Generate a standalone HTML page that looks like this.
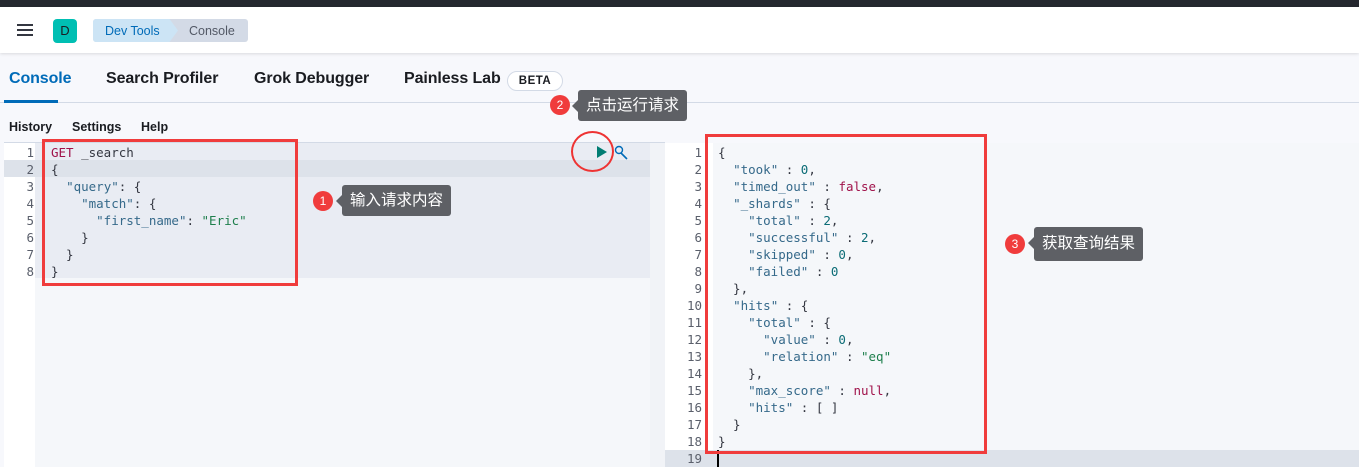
<!DOCTYPE html>
<html><head><meta charset="utf-8"><style>
*{margin:0;padding:0;box-sizing:border-box}
body{width:1359px;height:467px;overflow:hidden;background:#f7f8fc;font-family:"Liberation Sans","Noto Sans CJK SC",sans-serif;position:relative}
.abs{position:absolute}
.mono{font-family:"DejaVu Sans Mono","Liberation Mono",monospace;font-size:12.5px;white-space:pre}
.ln{position:absolute;text-align:right;color:#5a5f6b;width:28px}
.k{color:#35698a}.s{color:#1e7f4c}.n{color:#0b6c76}.r{color:#a0124a}.p{color:#343741}
.tip{position:absolute;background:#5e6065;color:#fff;font-size:15.5px;padding:0 8px;height:31px;line-height:31px;border-radius:3px}
.tip:before{content:"";position:absolute;left:-6px;top:10px;border:6px solid transparent;border-left:0;border-right-color:#5e6065}
.bd{position:absolute;width:20px;height:20px;border-radius:50%;background:#f03c3c;color:#fff;font-size:12px;text-align:center;line-height:20px}
.tab{position:absolute;top:70px;font-size:16px;font-weight:bold;color:#1a1c21;letter-spacing:-0.1px}
</style></head><body>
<div class="abs" style="left:0;top:0;width:1359px;height:7px;background:#25282f"></div>
<div class="abs" style="left:0;top:7px;width:1359px;height:46px;background:#fff;box-shadow:0 1px 3px rgba(0,0,0,.12)"></div>
<div class="abs" style="left:17px;top:24px;width:16px;height:2px;background:#343741;box-shadow:0 5px 0 #343741,0 10px 0 #343741"></div>
<div class="abs" style="left:53px;top:19px;width:24px;height:24px;border-radius:4px;background:#00bfb3;color:#1a1c21;font-size:13px;text-align:center;line-height:24px">D</div>
<div class="abs" style="left:93px;top:19px;width:155px;height:23px;border-radius:3px;background:#d3dae6"></div>
<div class="abs" style="left:93px;top:19px;width:85px;height:23px;background:#cce4f5;border-radius:3px 0 0 3px;clip-path:polygon(0 0,90% 0,100% 50%,90% 100%,0 100%)"></div>
<div class="abs" style="left:105px;top:24px;font-size:12.5px;color:#006bb8">Dev Tools</div>
<div class="abs" style="left:189px;top:24px;font-size:12.5px;color:#535966">Console</div>
<div class="abs" style="left:0;top:102px;width:1359px;height:1px;background:#d3dae6"></div>
<div class="tab" style="left:9px;color:#006bb8">Console</div>
<div class="abs" style="left:4px;top:100px;width:54px;height:3px;background:#006bb8"></div>
<div class="tab" style="left:106px">Search Profiler</div>
<div class="tab" style="left:254px">Grok Debugger</div>
<div class="tab" style="left:404px">Painless Lab</div>
<div class="abs" style="left:507px;top:71px;width:56px;height:20px;border:1px solid #d3dae6;border-radius:10px;background:#fff;font-size:11.5px;font-weight:bold;text-align:center;line-height:18px;color:#1a1c21;letter-spacing:.5px">BETA</div>
<div class="abs" style="left:9px;top:120px;font-size:12.5px;font-weight:bold;color:#1a1c21">History</div>
<div class="abs" style="left:72px;top:120px;font-size:12.5px;font-weight:bold;color:#1a1c21">Settings</div>
<div class="abs" style="left:141px;top:120px;font-size:12.5px;font-weight:bold;color:#1a1c21">Help</div>
<div class="abs" style="left:4px;top:142px;width:661px;height:1px;background:#d3dae6"></div>
<div class="abs" style="left:4px;top:143px;width:31px;height:324px;background:#fff"></div>
<div class="abs" style="left:35px;top:143px;width:615px;height:324px;background:#f5f7fa"></div>
<div class="abs" style="left:35px;top:143px;width:615px;height:135px;background:#e9ecf3"></div>
<div class="abs" style="left:4px;top:160px;width:646px;height:17px;background:#dde2ea"></div>
<div class="abs" style="left:650px;top:143px;width:15px;height:324px;background:#f1f3f7"></div>
<div class="mono" style="position:absolute;left:0;top:144px;line-height:17px">
<div class="ln" style="top:0;left:6px">1</div><div class="ln" style="top:17px;left:6px">2</div><div class="ln" style="top:34px;left:6px">3</div><div class="ln" style="top:51px;left:6px">4</div><div class="ln" style="top:68px;left:6px">5</div><div class="ln" style="top:85px;left:6px">6</div><div class="ln" style="top:102px;left:6px">7</div><div class="ln" style="top:119px;left:6px">8</div>
</div>
<div class="mono p" style="position:absolute;left:51px;top:144px;line-height:17px"><span class="r">GET</span> _search
{
  <span class="k">"query"</span>: {
    <span class="k">"match"</span>: {
      <span class="k">"first_name"</span>: <span class="s">"Eric"</span>
    }
  }
}</div>
<svg class="abs" style="left:595px;top:144px" width="40" height="16"><path d="M2 2L12 8L2 14Z" fill="#017d73"/><circle cx="24" cy="6" r="3.5" fill="none" stroke="#006bb8" stroke-width="1.4"/><path d="M26 9l6 6" stroke="#006bb8" stroke-width="1.6"/></svg>
<div class="abs" style="left:665px;top:143px;width:694px;height:324px;background:#fff"></div>
<div class="abs" style="left:713px;top:143px;width:646px;height:324px;background:#f5f7fa"></div>
<div class="abs" style="left:665px;top:450px;width:694px;height:17px;background:#dde2ea"></div>
<div class="abs" style="left:717px;top:450px;width:2px;height:17px;background:#000"></div>
<div class="mono" style="position:absolute;left:674px;top:144px;line-height:17px;text-align:right;color:#5a5f6b;width:28px">1
2
3
4
5
6
7
8
9
10
11
12
13
14
15
16
17
18
19</div>
<div class="mono p" style="position:absolute;left:718px;top:144px;line-height:17px">{
  <span class="k">"took"</span> : <span class="n">0</span>,
  <span class="k">"timed_out"</span> : <span class="r">false</span>,
  <span class="k">"_shards"</span> : {
    <span class="k">"total"</span> : <span class="n">2</span>,
    <span class="k">"successful"</span> : <span class="n">2</span>,
    <span class="k">"skipped"</span> : <span class="n">0</span>,
    <span class="k">"failed"</span> : <span class="n">0</span>
  },
  <span class="k">"hits"</span> : {
    <span class="k">"total"</span> : {
      <span class="k">"value"</span> : <span class="n">0</span>,
      <span class="k">"relation"</span> : <span class="s">"eq"</span>
    },
    <span class="k">"max_score"</span> : <span class="r">null</span>,
    <span class="k">"hits"</span> : [ ]
  }
}</div>
<div class="abs" style="left:42px;top:139px;width:256px;height:147px;border:3px solid #f03c3c"></div>
<div class="abs" style="left:705px;top:134px;width:282px;height:320px;border:3px solid #f03c3c"></div>
<div class="abs" style="left:571px;top:131px;width:43px;height:41px;border:2.5px solid #e33;border-radius:50%"></div>
<div class="bd" style="left:313px;top:191px">1</div>
<div class="tip" style="left:342px;top:185px">输入请求内容</div>
<div class="bd" style="left:550px;top:95px">2</div>
<div class="tip" style="left:578px;top:90px">点击运行请求</div>
<div class="bd" style="left:1005px;top:234px">3</div>
<div class="tip" style="left:1034px;top:227px;height:34px;line-height:34px">获取查询结果</div>
</body></html>
